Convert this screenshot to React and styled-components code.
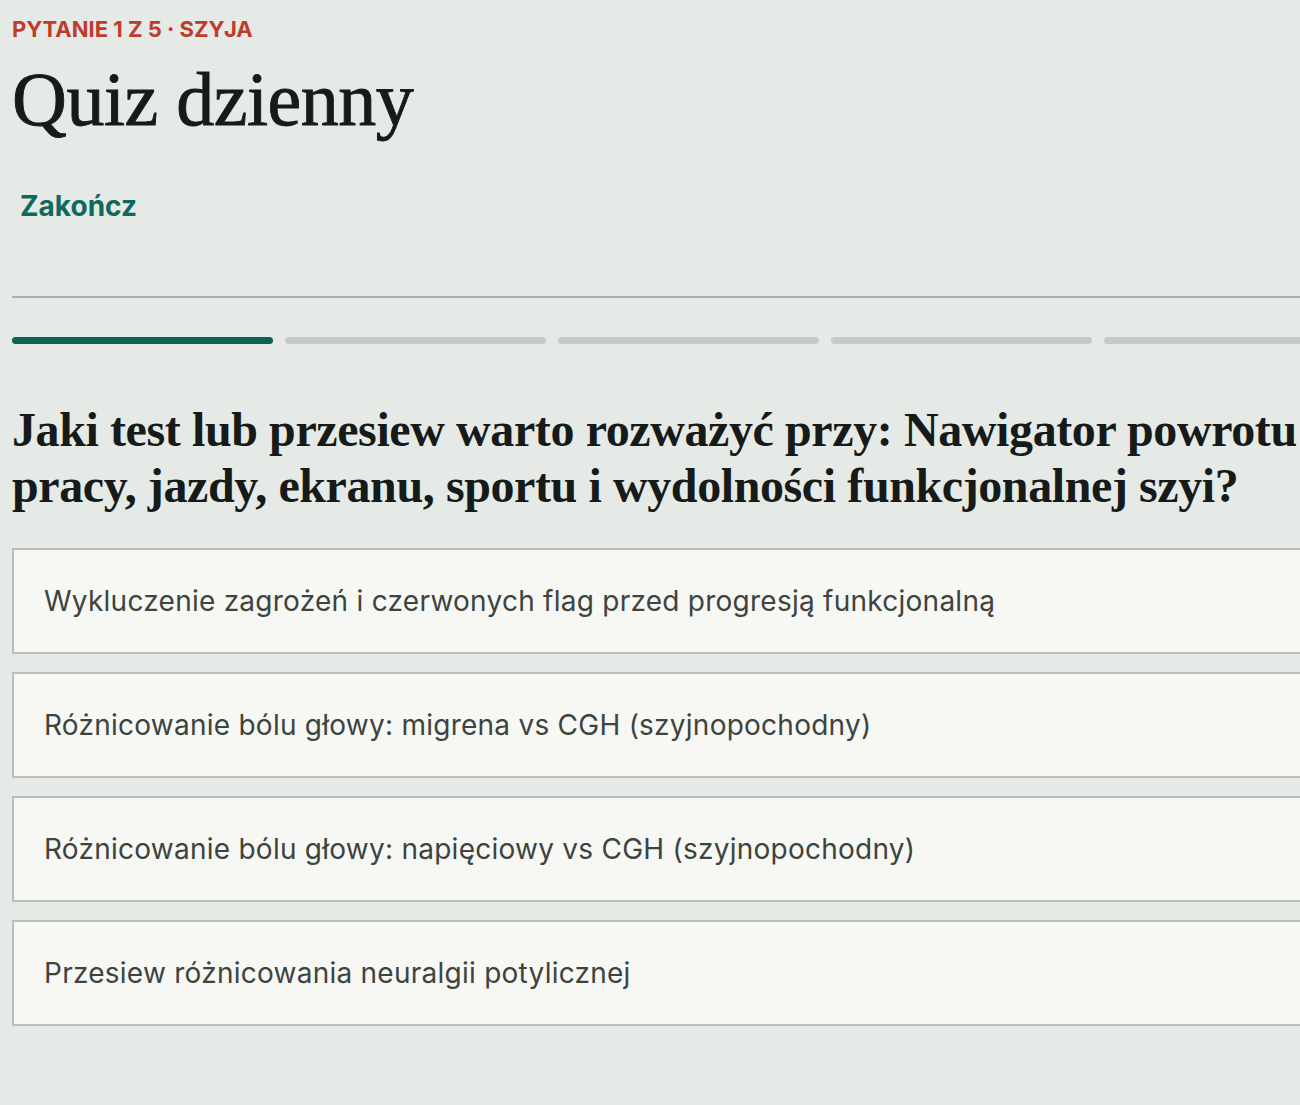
import React from "react"
import styled, { createGlobalStyle } from "styled-components"

const GlobalStyle = createGlobalStyle`
  html, body {
    margin: 0;
    padding: 0;
    background: #e5eae6;
    overflow-x: hidden;
  }
  * {
    box-sizing: border-box;
  }
`

const questions = [
  "Wykluczenie zagrożeń i czerwonych flag przed progresją funkcjonalną",
  "Różnicowanie bólu głowy: migrena vs CGH (szyjnopochodny)",
  "Różnicowanie bólu głowy: napięciowy vs CGH (szyjnopochodny)",
  "Przesiew różnicowania neuralgii potylicznej",
]

export default function App() {
  return (
    <>
      <GlobalStyle />
      <Page>
        <Header>
          <Eyebrow>PYTANIE 1 Z 5 · SZYJA</Eyebrow>
          <Title>Quiz dzienny</Title>
          <QuitButton>Zakończ</QuitButton>
        </Header>
        <Divider />
        <Progress>
          {[0, 1, 2, 3, 4].map((i) => (
            <Segment key={i} active={i === 0} />
          ))}
        </Progress>
        <Question>
          Jaki test lub przesiew warto rozważyć przy: Nawigator powrotu do
          pracy, jazdy, ekranu, sportu i wydolności funkcjonalnej szyi?
        </Question>
        <Answers>
          {questions.map((q) => (
            <Answer key={q}>{q}</Answer>
          ))}
        </Answers>
      </Page>
    </>
  )
}

const Page = styled.div`
  width: 1353px;
  margin-left: 12px;
  padding-top: 15px;
  font-family: "Inter", "Noto Sans", sans-serif;
`

const Header = styled.header`
  display: flex;
  flex-direction: column;
  align-items: flex-start;
`

const Eyebrow = styled.div`
  font-size: 22px;
  font-weight: 700;
  color: #bf3b2c;
  line-height: 28px;
`

const Title = styled.h1`
  margin: 8px 0 0;
  font-family: "Liberation Serif", "DejaVu Serif", serif;
  font-weight: 400;
  font-size: 76px;
  line-height: 96px;
  color: #161a18;
  letter-spacing: -0.5px;
  -webkit-text-stroke: 0.9px #161a18;
`

const QuitButton = styled.button`
  margin-top: 38px;
  padding: 4px 8px;
  border: none;
  background: none;
  font-family: "Inter", "Noto Sans", sans-serif;
  font-size: 28px;
  font-weight: 700;
  color: #0f6a5c;
  cursor: pointer;
`

const Divider = styled.hr`
  margin: 69px 0 0;
  border: none;
  border-top: 2px solid #a8aeaa;
`

const Progress = styled.div`
  display: flex;
  gap: 12px;
  margin-top: 39px;
`

const Segment = styled.div`
  flex: 1;
  height: 7px;
  border-radius: 4px;
  background: ${(p) => (p.active ? "#0b6458" : "#c6cbc7")};
`

const Question = styled.h2`
  margin: 58px 0 0;
  font-family: "Liberation Serif", "DejaVu Serif", serif;
  font-weight: 700;
  font-size: 48px;
  line-height: 56px;
  color: #161a18;
  letter-spacing: -0.4px;
`

const Answers = styled.div`
  display: flex;
  flex-direction: column;
  gap: 18px;
  margin-top: 34px;
`

const Answer = styled.button`
  height: 106px;
  padding: 0 30px;
  text-align: left;
  background: #f7f7f3;
  border: 2px solid #b9bfbb;
  font-family: "Inter", "Noto Sans", sans-serif;
  font-size: 28px;
  letter-spacing: 0.25px;
  color: #3c4440;
  cursor: pointer;
`
